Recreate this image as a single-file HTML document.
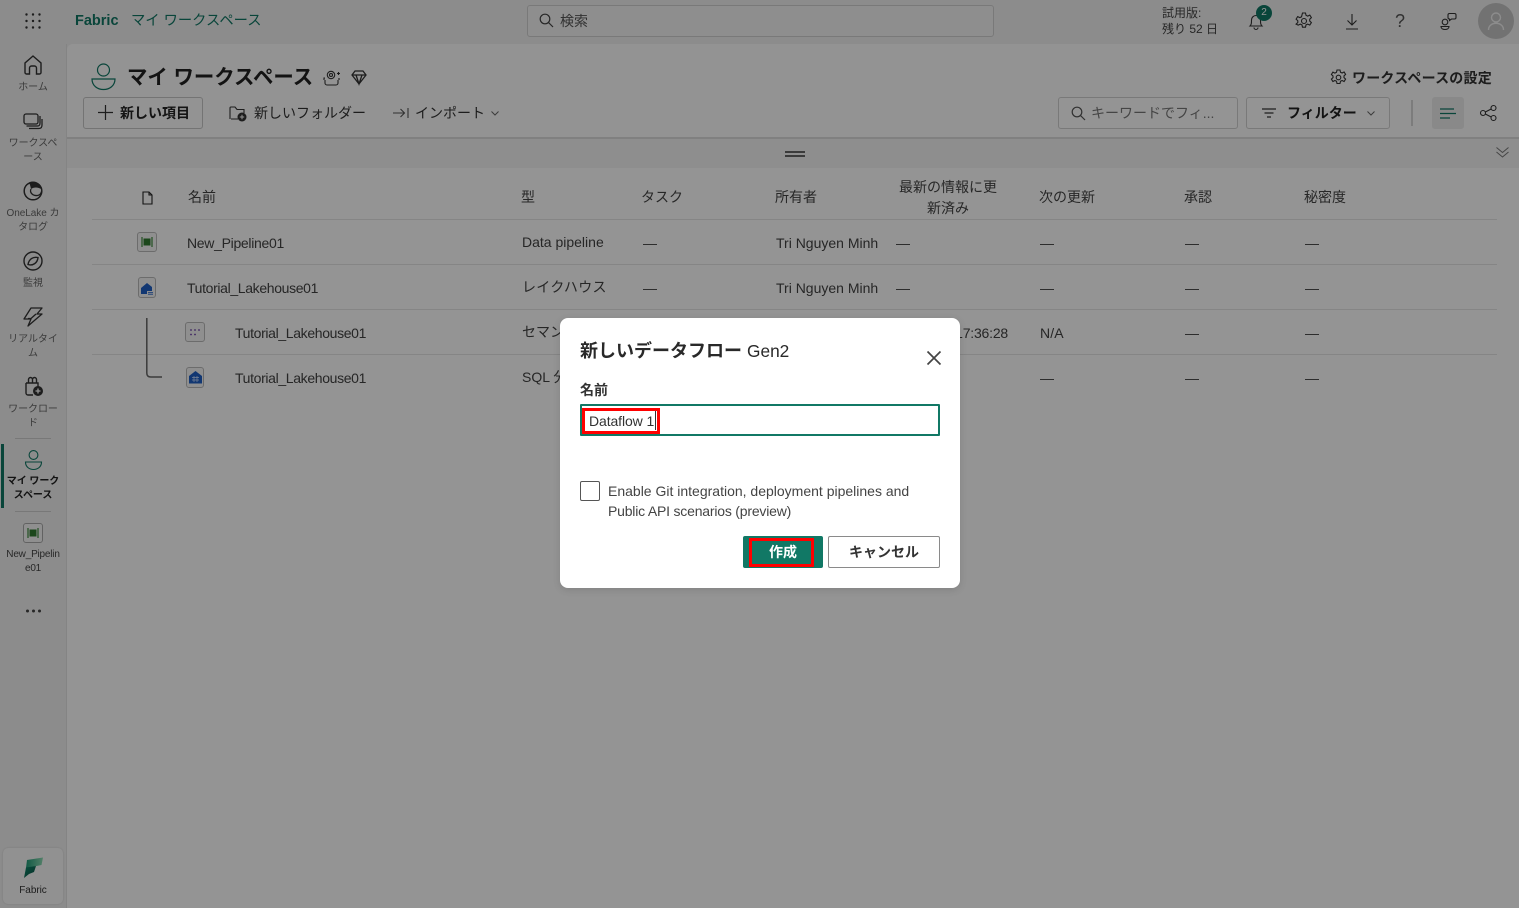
<!DOCTYPE html>
<html lang="ja"><head><meta charset="utf-8"><title>Fabric</title>
<style>
html,body{margin:0;padding:0;width:1519px;height:908px;overflow:hidden;background:#f2f2f2}
body{font-family:"Liberation Sans","Noto Sans CJK JP",sans-serif;color:#242424;position:relative;font-size:14px}
.t{position:absolute;white-space:nowrap;line-height:20px}
.c{position:absolute;text-align:center;font-size:10px;line-height:14px;color:#666;width:58px;left:4px;letter-spacing:-.05px}
.b{font-weight:700}
svg{position:absolute;overflow:visible;fill:none}
.line{position:absolute;left:92px;width:1405px;height:1px;background:#e6e6e6}
.h{color:#444;font-size:14px}
.r{color:#424242;font-size:14px;letter-spacing:-.35px}
.box{position:absolute;box-sizing:border-box}
</style></head><body>
<div class="box" style="left:67px;top:44px;width:1452px;height:864px;background:#fff;border-top-left-radius:6px"></div>
<div class="box" style="left:67px;top:44px;width:1452px;height:95px;background:#fdfdfd;border-bottom:2px solid #dcdcdc;border-top-left-radius:6px"></div>
<div class="box" style="left:67px;top:139px;width:1452px;height:29px;background:#f4f4f4"></div>
<div class="box" style="left:66px;top:44px;width:1px;height:864px;background:#e4e4e4"></div>

<!-- top bar -->
<svg style="left:25px;top:13px" width="16" height="16"><g fill="#333"><circle cx="1.500" cy="1.500" r="1.200"/><circle cx="8" cy="1.500" r="1.200"/><circle cx="14.500" cy="1.500" r="1.200"/><circle cx="1.500" cy="8" r="1.200"/><circle cx="8" cy="8" r="1.200"/><circle cx="14.500" cy="8" r="1.200"/><circle cx="1.500" cy="14.500" r="1.200"/><circle cx="8" cy="14.500" r="1.200"/><circle cx="14.500" cy="14.500" r="1.200"/></g></svg>
<div class="t b" style="left:75px;top:11px;font-size:14.500px;color:#117865">Fabric</div>
<div class="t" style="left:131px;top:11px;font-size:14.300px;color:#117865">マイ ワークスペース</div>
<div class="box" style="left:527px;top:5px;width:467px;height:32px;background:#f5f5f5;border:1px solid #d1d1d1;border-radius:3px"></div>
<svg style="left:539px;top:13px" width="15" height="15"><g stroke="#444" stroke-width="1.200"><circle cx="6" cy="6" r="4.800"/><path d="M9.500 9.500 14 14"/></g></svg>
<div class="t" style="left:560px;top:11px;color:#555;font-size:14px">検索</div>
<div class="t" style="left:1162px;top:5px;font-size:12px;line-height:16px;color:#444">試用版:<br>残り 52 日</div>
<svg style="left:1248px;top:13px" width="16" height="18"><path stroke="#333" stroke-width="1.100" d="M2 13c1.500-1.500 1.500-3 1.500-6a4.500 4.500 0 0 1 9 0c0 3 0 4.500 1.500 6zM6 14.500a2 2 0 0 0 4 0"/></svg>
<div class="box" style="left:1256px;top:5px;width:16px;height:16px;border-radius:50%;background:#117865;color:#fff;font-size:10px;line-height:16px;text-align:center">2</div>
<svg style="left:1295px;top:12px" width="18" height="18"><g stroke="#333" stroke-width="1.100"><path d="M7.500 1h3l.5 2.300 1.700.8 2.100-1 1.600 2.500-1.700 1.600v1.800l1.700 1.600-1.600 2.500-2.100-1-1.700.8-.5 2.300h-3l-.5-2.300-1.700-.8-2.100 1L1.100 12.100l1.700-1.600V8.700L1.100 7.100l1.600-2.500 2.100 1 1.700-.8z"/><circle cx="9" cy="9" r="2.500"/></g></svg>
<svg style="left:1345px;top:13px" width="14" height="17"><path stroke="#333" stroke-width="1.100" d="M7 1v11M2.500 7.500 7 12l4.500-4.500M1 16h12"/></svg>
<div class="t" style="left:1395px;top:11px;font-size:18px;color:#555">?</div>
<svg style="left:1440px;top:12px" width="17" height="18"><g stroke="#333" stroke-width="1.100"><circle cx="5" cy="10" r="2.800"/><path d="M1 14.500h8c0 4-8 4-8 0zM8 3q0-1.500 1.500-1.500h5q1.500 0 1.500 1.500v2.500q0 1.500-1.500 1.500H11.500L9.500 8.500V7Q8 7 8 5.500z"/></g></svg>
<div class="box" style="left:1478px;top:3px;width:36px;height:36px;border-radius:50%;background:#c4c4c4"></div>
<svg style="left:1487px;top:11px" width="18" height="20"><g stroke="#f2f2f2" stroke-width="1.400"><circle cx="9" cy="6.500" r="4.500"/><path d="M1.500 19c0-9 15-9 15 0"/></g></svg>

<!-- sidebar -->
<svg style="left:24px;top:55px" width="18" height="20"><path stroke="#333" stroke-width="1.400" d="M1 17.500V8L9 1l8 7v9.500a1.500 1.500 0 0 1-1.500 1.500H12.500v-6a2 2 0 0 0-2-2h-3a2 2 0 0 0-2 2v6H2.500A1.500 1.500 0 0 1 1 17.500z"/></svg>
<div class="c" style="top:81px">ホーム</div>
<svg style="left:23px;top:113px" width="20" height="17"><path stroke="#333" stroke-width="1.300" d="M3 1h10a2 2 0 0 1 2 2v6a2 2 0 0 1-2 2H3a2 2 0 0 1-2-2V3a2 2 0 0 1 2-2zM3.500 13h11c2 0 2.500-1 2.500-3V3M6 15.500h9.500c2.500 0 3.500-1 3.500-3.500V6"/></svg>
<div class="c" style="top:137px">ワークスペ<br>ース</div>
<svg style="left:23px;top:181px" width="20" height="20"><circle cx="10" cy="10" r="8.800" stroke="#333" stroke-width="1.500"/><path d="M6 1.500C11-.5 18 3 19 8.500 15 6 11 6 8 8 7.500 5.500 7 3.500 6 1.500z" fill="#333"/><path d="M8 8c-1.500 3 1 7 6.500 6.500 2-.3 3.500-2 4-4" stroke="#333" stroke-width="1.300"/></svg>
<div class="c" style="top:207px">OneLake カ<br>タログ</div>
<svg style="left:23px;top:251px" width="20" height="20"><circle cx="10" cy="10" r="9" stroke="#333" stroke-width="1.400"/><path stroke="#333" stroke-width="1.400" d="M5 13.500C6 8 10 5.500 15 6.500 14.500 12 10 15 5 13.500z"/></svg>
<div class="c" style="top:277px">監視</div>
<svg style="left:23px;top:307px" width="20" height="20"><path stroke="#333" stroke-width="1.300" stroke-linejoin="round" d="M8 1h11l-5 6h5L5 19l3-7H1zM5 11.500h3L13 7"/></svg>
<div class="c" style="top:333px">リアルタイ<br>ム</div>
<svg style="left:24px;top:376px" width="20" height="21"><path stroke="#333" stroke-width="1.400" d="M2 7h12v5M9 19H4a2 2 0 0 1-2-2V7M4.500 7V3.500a2 2 0 0 1 4 0V7M8.500 7V3.500a2 2 0 0 1 4 0V7"/><circle cx="14" cy="15" r="5" fill="#333"/><path d="M14 12.500v5M11.500 15h5" stroke="#fff" stroke-width="1.300"/></svg>
<div class="c" style="top:403px">ワークロー<br>ド</div>
<div class="box" style="left:15px;top:438px;width:36px;height:1px;background:#cfcfcf"></div>
<div class="box" style="left:1px;top:444px;width:3px;height:64px;background:#117865"></div>
<svg style="left:24px;top:450px" width="19" height="21"><g stroke="#117865" stroke-width="1.100"><circle cx="9.500" cy="5" r="4.400"/><path d="M1.500 12h16c0 10-16 10-16 0z"/></g></svg>
<div class="c b" style="top:475px;color:#222">マイ ワーク<br>スペース</div>
<div class="box" style="left:15px;top:511px;width:36px;height:1px;background:#cfcfcf"></div>
<div class="box" style="left:23px;top:523px;width:20px;height:20px;border:1px solid #aaa;border-radius:3px;background:#f7f7f7"></div>
<svg style="left:27px;top:528px" width="12" height="10"><path stroke="#3a8a3a" stroke-width="1.200" d="M1 0v10M11 0v10"/><rect x="2.500" y="1.500" width="7" height="7" fill="#2f7a2f"/></svg>
<div class="c" style="top:548px;left:3px;width:60px;color:#444;letter-spacing:-.2px">New_Pipelin<br>e01</div>
<svg style="left:26px;top:609px" width="15" height="4"><g fill="#444"><circle cx="1.500" cy="2" r="1.500"/><circle cx="7.500" cy="2" r="1.500"/><circle cx="13.500" cy="2" r="1.500"/></g></svg>
<div class="box" style="left:3px;top:848px;width:60px;height:56px;background:#fafafa;border-radius:5px;box-shadow:0 0 2px rgba(0,0,0,.15)"></div>
<svg style="left:23px;top:857px" width="21" height="22"><defs><linearGradient id="g1" x1="0" y1="0" x2="1" y2="0"><stop offset="0" stop-color="#1f9a78"/><stop offset="1" stop-color="#8fdcb4"/></linearGradient><linearGradient id="g2" x1="0" y1="0" x2="1" y2="1"><stop offset="0" stop-color="#118a6c"/><stop offset="1" stop-color="#0b4f44"/></linearGradient></defs><path d="M4 3 20 .5 18.500 8 3 11z" fill="url(#g1)"/><path d="M3 10.500 13 9l-2 6-5 2-5 4z" fill="url(#g2)"/></svg>
<div class="c" style="top:884px;color:#333;left:4px">Fabric</div>

<!-- page header -->
<svg style="left:91px;top:63px" width="25" height="28"><g stroke="#117865" stroke-width="1.200"><circle cx="12.500" cy="7" r="6"/><path d="M1 16h23c0 14-23 14-23 0z"/></g></svg>
<div class="t b" style="left:127px;top:65px;font-size:20.400px;line-height:26px;color:#222">マイ ワークスペース</div>
<svg style="left:323px;top:69px" width="17" height="17"><g stroke="#333" stroke-width="1.100"><path d="M2 9H1v2M16 9v2M2 11v3a2 2 0 0 0 2 2h9a2 2 0 0 0 2-2v-3"/><circle cx="8" cy="6" r="3.700"/><circle cx="8" cy="6" r="1.500"/><path d="M14 4.500h3M15.500 3v3"/></g></svg>
<svg style="left:351px;top:70px" width="16" height="15"><path stroke="#333" stroke-width="1.300" d="M4 1h8l3 4-7 9-7-9zM1 5h14M5 5l3 9 3-9"/></svg>
<div class="box" style="left:83px;top:97px;width:120px;height:32px;border:1px solid #c8c8c8;border-radius:3px"></div>
<svg style="left:98px;top:105px" width="15" height="15"><path stroke="#333" stroke-width="1.200" d="M7.500 0v15M0 7.500h15"/></svg>
<div class="t b" style="left:120px;top:103px">新しい項目</div>
<svg style="left:229px;top:105px" width="19" height="17"><path stroke="#333" stroke-width="1.100" d="M1 14V3a1 1 0 0 1 1-1h4l2 2.500h7V8M9 14H2"/><circle cx="13" cy="12" r="4.500" fill="#333"/><path d="M13 9.800v4.400M10.800 12h4.400" stroke="#fff"/></svg>
<div class="t" style="left:254px;top:103px;color:#333">新しいフォルダー</div>
<svg style="left:393px;top:107px" width="16" height="12"><path stroke="#555" stroke-width="1.100" d="M0 6h11M7.500 2 11.500 6 7.500 10M15 1v10"/></svg>
<div class="t" style="left:415px;top:103px;color:#333">インポート</div>
<svg style="left:491px;top:111px" width="8" height="5"><path stroke="#666" stroke-width="1" d="M.5.500 4 4 7.500.500"/></svg>
<svg style="left:1330px;top:69px" width="17" height="17"><g stroke="#333" stroke-width="1.100"><path d="M7 1h3l.5 2.200 1.600.8 2-1 1.500 2.400-1.600 1.500v1.700l1.600 1.500-1.500 2.400-2-1-1.600.8-.5 2.200H7l-.5-2.200-1.600-.8-2 1-1.500-2.400 1.600-1.500V7l-1.600-1.500L2.900 3.100l2 1 1.600-.8z"/><circle cx="8.500" cy="8.500" r="2.300"/></g></svg>
<div class="t b" style="left:1352px;top:68px;color:#333;font-size:14px;letter-spacing:.2px">ワークスペースの設定</div>
<div class="box" style="left:1058px;top:97px;width:180px;height:32px;border:1px solid #d1d1d1;border-radius:3px;background:#fff"></div>
<svg style="left:1071px;top:106px" width="15" height="15"><g stroke="#555" stroke-width="1.200"><circle cx="6" cy="6" r="4.800"/><path d="M9.500 9.500 14 14"/></g></svg>
<div class="t" style="left:1091px;top:103px;color:#777">キーワードでフィ...</div>
<div class="box" style="left:1246px;top:97px;width:144px;height:32px;border:1px solid #d1d1d1;border-radius:3px;background:#fff"></div>
<svg style="left:1262px;top:108px" width="14" height="10"><path stroke="#333" stroke-width="1.200" d="M0 1h14M2.500 5h9M5 9h4"/></svg>
<div class="t b" style="left:1287px;top:103px;color:#222">フィルター</div>
<svg style="left:1367px;top:111px" width="8" height="5"><path stroke="#666" stroke-width="1" d="M.5.500 4 4 7.500.500"/></svg>
<div class="box" style="left:1411px;top:100px;width:2px;height:26px;background:#d6d6d6"></div>
<div class="box" style="left:1432px;top:97px;width:32px;height:32px;background:#ededed;border-radius:3px"></div>
<svg style="left:1440px;top:108px" width="16" height="12"><path stroke="#117865" stroke-width="1.300" d="M0 1h14M0 5.500h16M0 10h10"/></svg>
<svg style="left:1480px;top:105px" width="17" height="16"><g stroke="#333" stroke-width="1.100"><circle cx="3" cy="8" r="2.500"/><circle cx="13.500" cy="3" r="2.500"/><circle cx="13.500" cy="13" r="2.500"/><path d="M5.300 7 11.200 4M5.300 9l5.900 3"/></g></svg>
<div class="box" style="left:785px;top:151px;width:20px;height:2px;background:#666"></div>
<div class="box" style="left:785px;top:155px;width:20px;height:2px;background:#666"></div>
<svg style="left:1496px;top:147px" width="13" height="11"><path stroke="#777" stroke-width="1" d="M.5.500 6.500 5.500 12.500.500M.5 5 6.500 10 12.500 5"/></svg>

<!-- table -->
<svg style="left:142px;top:191px" width="11" height="14"><path stroke="#222" stroke-width="1.100" d="M1 1h6l3 3v9H1zM7 1v3h3"/></svg>
<div class="t h" style="left:188px;top:187px">名前</div>
<div class="t h" style="left:521px;top:187px">型</div>
<div class="t h" style="left:641px;top:187px">タスク</div>
<div class="t h" style="left:775px;top:187px">所有者</div>
<div class="t h" style="left:893px;top:177px;width:110px;text-align:center;line-height:21px;white-space:normal">最新の情報に更新済み</div>
<div class="t h" style="left:1039px;top:187px">次の更新</div>
<div class="t h" style="left:1184px;top:187px">承認</div>
<div class="t h" style="left:1304px;top:187px">秘密度</div>
<div class="line" style="top:219px"></div><div class="line" style="top:264px"></div><div class="line" style="top:309px"></div><div class="line" style="top:354px"></div>

<div class="box" style="left:137px;top:232px;width:20px;height:20px;border:1px solid #bbb;border-radius:3px;background:#f7f7f7"></div>
<svg style="left:141px;top:237px" width="12" height="10"><path stroke="#3a8a3a" stroke-width="1.200" d="M1 0v10M11 0v10"/><rect x="2.500" y="1.500" width="7" height="7" fill="#2f7a2f"/></svg>
<div class="t r" style="left:187px;top:233px;letter-spacing:-.3px">New_Pipeline01</div>
<div class="t r" style="left:522px;top:232px;letter-spacing:0">Data pipeline</div>
<div class="t r" style="left:643px;top:233px">—</div>
<div class="t r" style="left:776px;top:233px;letter-spacing:0">Tri Nguyen Minh</div>
<div class="t r" style="left:896px;top:233px">—</div><div class="t r" style="left:1040px;top:233px">—</div><div class="t r" style="left:1185px;top:233px">—</div><div class="t r" style="left:1305px;top:233px">—</div>

<div class="box" style="left:138px;top:277px;width:18px;height:21px;border:1px solid #bbb;border-radius:3px;background:#f7f7f7"></div>
<svg style="left:141px;top:282px" width="13" height="13"><path d="M0 12V6l6-5 5 4v7z" fill="#1f5fc4"/><path d="M6 9h7v4H6z" fill="#f7f7f7"/><path d="M7 10.500h5M7 12.200h5" stroke="#1f5fc4" stroke-width=".8"/></svg>
<div class="t r" style="left:187px;top:278px">Tutorial_Lakehouse01</div>
<div class="t r" style="left:522px;top:277px;letter-spacing:.3px">レイクハウス</div>
<div class="t r" style="left:643px;top:278px">—</div>
<div class="t r" style="left:776px;top:278px;letter-spacing:0">Tri Nguyen Minh</div>
<div class="t r" style="left:896px;top:278px">—</div><div class="t r" style="left:1040px;top:278px">—</div><div class="t r" style="left:1185px;top:278px">—</div><div class="t r" style="left:1305px;top:278px">—</div>

<svg style="left:146px;top:318px" width="17" height="60"><path stroke="#666" stroke-width="1.500" d="M.8 0v55q0 4 4 4H16"/></svg>
<div class="box" style="left:185px;top:322px;width:20px;height:20px;border:1px solid #bbb;border-radius:3px;background:#f7f7f7"></div>
<svg style="left:190px;top:329px" width="10" height="7"><g fill="#6b3fa8"><circle cx="1" cy="1" r=".9"/><circle cx="5" cy="1" r=".9"/><circle cx="9" cy="1" r=".9"/><circle cx="1" cy="5.500" r=".9"/><circle cx="5" cy="5.500" r=".9"/></g></svg>
<div class="t r" style="left:235px;top:323px">Tutorial_Lakehouse01</div>
<div class="t r" style="left:522px;top:322px;letter-spacing:0">セマンティック モデル</div>
<div class="t r" style="left:880px;top:323px;width:128px;text-align:right;letter-spacing:-.2px">2024/10/27 17:36:28</div>
<div class="t r" style="left:1040px;top:323px;letter-spacing:.1px">N/A</div><div class="t r" style="left:1185px;top:323px">—</div><div class="t r" style="left:1305px;top:323px">—</div>

<div class="box" style="left:186px;top:367px;width:18px;height:21px;border:1px solid #bbb;border-radius:3px;background:#f7f7f7"></div>
<svg style="left:189px;top:371px" width="13" height="13"><path d="M0 12.500V5l6.500-5L13 5v7.500z" fill="#1f5fc4"/><path d="M3 6.500h7M3 9h7M5 5v6M8 5v6" stroke="#cfe0ff" stroke-width=".7"/></svg>
<div class="t r" style="left:235px;top:368px">Tutorial_Lakehouse01</div>
<div class="t r" style="left:522px;top:367px;letter-spacing:0">SQL 分析エンドポイント</div>
<div class="t r" style="left:1040px;top:368px">—</div><div class="t r" style="left:1185px;top:368px">—</div><div class="t r" style="left:1305px;top:368px">—</div>

<!-- overlay -->
<div class="box" style="left:0;top:0;width:1519px;height:908px;background:rgba(0,0,0,.42)"></div>

<!-- dialog -->
<div class="box" style="left:560px;top:318px;width:400px;height:270px;background:#fff;border-radius:8px;box-shadow:0 2px 8px rgba(0,0,0,.12)"></div>
<div class="t b" style="left:580px;top:339px;font-size:18px;line-height:24px;color:#292929">新しいデータフロー <span style="font-weight:400;font-size:17.300px">Gen2</span></div>
<svg style="left:927px;top:351px" width="14" height="14"><path stroke="#444" stroke-width="1.700" d="M.5.500 13.500 13.500M13.500.500.500 13.500"/></svg>
<div class="t b" style="left:580px;top:380px;font-size:14px;color:#333">名前</div>
<div class="box" style="left:580px;top:404px;width:360px;height:32px;border:2px solid #117865;border-radius:1px"></div>
<div class="t" style="left:589px;top:411px;font-size:14px;color:#333;letter-spacing:-.1px">Dataflow 1</div>
<div class="box" style="left:655px;top:411px;width:1px;height:19px;background:#333"></div>
<div class="box" style="left:582px;top:408px;width:78px;height:26px;border:3px solid #f00"></div>
<div class="box" style="left:580px;top:481px;width:20px;height:20px;border:1px solid #555;border-radius:2px"></div>
<div class="t" style="left:608px;top:481px;font-size:14px;color:#444">Enable Git integration, deployment pipelines and</div>
<div class="t" style="left:608px;top:501px;font-size:14px;color:#444;letter-spacing:-.2px">Public API scenarios (preview)</div>
<div class="box" style="left:743px;top:536px;width:80px;height:32px;background:#117865;border-radius:2px"></div>
<div class="t b" style="left:743px;top:542px;width:80px;text-align:center;color:#fff;font-size:14px">作成</div>
<div class="box" style="left:749px;top:538px;width:65px;height:29px;border:3px solid #f00"></div>
<div class="box" style="left:828px;top:536px;width:112px;height:32px;border:1px solid #8a8a8a;border-radius:2px"></div>
<div class="t b" style="left:828px;top:542px;width:112px;text-align:center;font-size:14px;color:#333">キャンセル</div>
</body></html>
